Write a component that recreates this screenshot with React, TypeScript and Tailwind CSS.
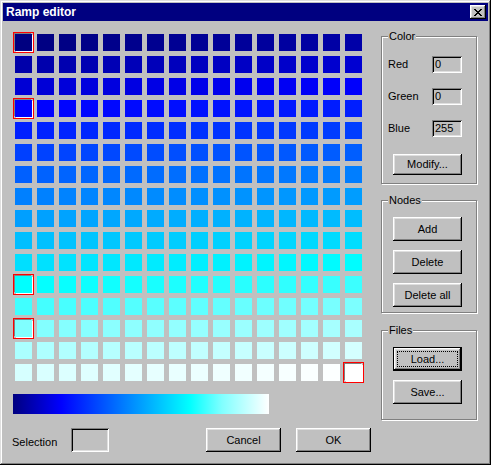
import React from "react";

// nodi della rampa: indice -> colore
const NODES: [number, [number, number, number]][] = [
  [0, [0, 0, 128]],
  [48, [0, 0, 255]],
  [176, [0, 255, 255]],
  [208, [128, 255, 255]],
  [255, [255, 255, 255]],
];

function rampColor(i: number) {
  for (let n = 0; n < NODES.length - 1; n++) {
    const [a, ca] = NODES[n];
    const [b, cb] = NODES[n + 1];
    if (i >= a && i <= b) {
      const t = (i - a) / (b - a);
      const c = ca.map((v, k) => Math.round(v + (cb[k] - v) * t));
      return `rgb(${c[0]},${c[1]},${c[2]})`;
    }
  }
  return "#fff";
}

const nodeSet = new Set(NODES.map((n) => n[0]));

const btn =
  "flex shrink-0 items-center justify-center bg-[#c0c0c0] text-[11px] text-black shadow-[inset_-1px_-1px_#000,inset_1px_1px_#fff,inset_-2px_-2px_#808080,inset_2px_2px_#dfdfdf]";

const sunken =
  "shrink-0 bg-[#c0c0c0] shadow-[inset_1px_1px_#808080,inset_-1px_-1px_#fff,inset_2px_2px_#000,inset_-2px_-2px_#dfdfdf]";

function CloseGlyph() {
  const rows = ["xx....xx", ".xx..xx.", "..xxxx..", "...xx...", "..xxxx..", ".xx..xx.", "xx....xx"];
  return (
    <svg width={8} height={7} viewBox="0 0 8 7" shapeRendering="crispEdges">
      {rows.map((r, y) =>
        r.split("").map((ch, x) => (ch === "x" ? <rect key={`${x}-${y}`} x={x} y={y} width={1} height={1} fill="#000" /> : null))
      )}
    </svg>
  );
}

function Group({ label, className, children }: { label: string; className: string; children: React.ReactNode }) {
  return (
    <div className={`relative flex flex-col border border-[#808080] shadow-[inset_1px_1px_#fff,1px_1px_#fff] ${className}`}>
      <span className="absolute -top-[8px] left-[6px] bg-[#c0c0c0] px-[1px] text-[11px] leading-[14px]">{label}</span>
      {children}
    </div>
  );
}

function Field({ label, value }: { label: string; value: string }) {
  return (
    <div className="flex h-[17px] items-center pl-[6px]">
      <span className="w-[44px] shrink-0 text-[11px]">{label}</span>
      <div className={`${sunken} flex h-[17px] w-[30px] items-center pl-[3px] text-[11px]`}>{value}</div>
    </div>
  );
}

export default function App() {
  const cells = Array.from({ length: 256 }, (_, i) => i);

  return (
    <div
      className="flex h-[465px] w-[491px] flex-col bg-[#c0c0c0] p-[3px] text-black shadow-[inset_-1px_-1px_#000,inset_1px_1px_#dfdfdf,inset_-2px_-2px_#808080,inset_2px_2px_#fff]"
      style={{ fontFamily: '"Liberation Sans", Arial, sans-serif' }}
    >
      {/* barra del titolo */}
      <div className="flex h-[18px] items-center justify-between bg-[#000080] pl-[3px] pr-[2px]">
        <span className="text-[12px] font-bold text-white">Ramp editor</span>
        <div className={`${btn} h-[14px] w-[16px]`}>
          <CloseGlyph />
        </div>
      </div>

      <div className="flex pl-[12px]">
        {/* colonna sinistra */}
        <div className="flex w-[347px] shrink-0 flex-col">
          <div className="mt-[13px] grid grid-cols-[repeat(16,17px)] gap-[5px]">
            {cells.map((i) => (
              <div
                key={i}
                className={`h-[17px] w-[17px] ${
                  nodeSet.has(i)
                    ? "shadow-[-1px_-1px_0_0_#808080,1px_1px_0_0_#fff,0_0_0_1px_#c0c0c0,0_0_0_2px_#ff0000]"
                    : ""
                }`}
                style={{ background: rampColor(i) }}
              />
            ))}
          </div>

          {/* barra gradiente */}
          <div className="-ml-[2px] mt-[13px] h-[20px] w-[256px] bg-[linear-gradient(to_right,#000080_0%,#0000ff_18.8%,#00ffff_69%,#80ffff_81.6%,#ffffff_100%)]" />

          <div className="-ml-[3px] mt-[14px] flex h-[24px] w-[370px] items-center">
            <span className="w-[59px] shrink-0 pt-[5px] text-[11px]">Selection</span>
            <div className={`${sunken} h-[24px] w-[38px]`} />
            <button className={`${btn} ml-[97px] h-[24px] w-[75px]`}>Cancel</button>
            <button className={`${btn} ml-[15px] h-[24px] w-[75px]`}>OK</button>
          </div>
        </div>

        {/* colonna destra */}
        <div className="ml-[19px] mt-[15px] flex w-[96px] shrink-0 flex-col">
          <Group label="Color" className="h-[148px] pt-[19px]">
            <div className="flex flex-col gap-[15px]">
              <Field label="Red" value="0" />
              <Field label="Green" value="0" />
              <Field label="Blue" value="255" />
            </div>
            <button className={`${btn} ml-[11px] mt-[17px] h-[21px] w-[69px]`}>Modify...</button>
          </Group>

          <Group label="Nodes" className="mt-[16px] h-[113px] gap-[9px] pt-[16px]">
            <button className={`${btn} ml-[11px] h-[24px] w-[69px]`}>Add</button>
            <button className={`${btn} ml-[11px] h-[24px] w-[69px]`}>Delete</button>
            <button className={`${btn} ml-[11px] h-[24px] w-[69px]`}>Delete all</button>
          </Group>

          <Group label="Files" className="mt-[17px] h-[90px] gap-[9px] pt-[16px]">
            <button className="relative ml-[11px] flex h-[24px] w-[69px] shrink-0 items-center justify-center border border-black bg-[#c0c0c0] text-[11px] shadow-[inset_-1px_-1px_#000,inset_1px_1px_#fff,inset_-2px_-2px_#808080,inset_2px_2px_#dfdfdf]">
              <span className="absolute inset-[3px] border border-dotted border-black" />
              Load...
            </button>
            <button className={`${btn} ml-[11px] h-[24px] w-[69px]`}>Save...</button>
          </Group>
        </div>
      </div>
    </div>
  );
}
